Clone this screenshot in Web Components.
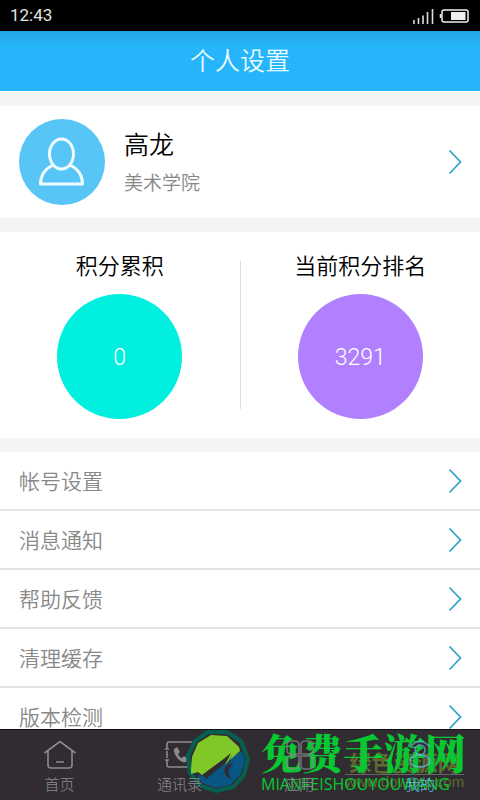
<!DOCTYPE html>
<html lang="zh-CN">
<head>
<meta charset="utf-8">
<title>个人设置</title>
<style>
html,body{margin:0;height:100%}
body{font-family:Roboto,"Noto Sans CJK SC",sans-serif;font-weight:300;background:#f4f4f4}
</style>
</head>
<body>
<settings-app></settings-app>
<script>
function define(name, html) {
  customElements.define(name, class extends HTMLElement {
    constructor() {
      super();
      this.attachShadow({mode: 'open'}).innerHTML = html;
    }
  });
}

define('status-bar', `
<style>
:host{display:flex;align-items:center;justify-content:space-between;height:31px;padding:0 10px;background:#000;color:#e4e4e4;font-size:17px;font-weight:400;line-height:31px}
svg{display:block}
</style>
<time>12:43</time>
<svg width="58" height="18" viewBox="0 0 58 18" aria-hidden="true">
<path d="M2 13v4M6.500 11v6M11 8.500v8.500M15.500 5v12M20.500 2v15" stroke="#ddd" stroke-width="1.600"/>
<rect x="30" y="3" width="26" height="12" rx="2" fill="none" stroke="#eee" stroke-width="1.500"/>
<path d="M28.500 7v4" stroke="#eee" stroke-width="1.500"/><rect x="39" y="5" width="14.500" height="8" fill="#eee"/>
</svg>`);

define('title-bar', `
<style>
:host{display:block;height:60px;background:linear-gradient(#25a5e2,#26b5fb 16px);color:#e6fbff;border-bottom:1px solid #fff;text-align:center}
h1{margin:0;font-size:25px;font-weight:350;line-height:62px}
</style>
<h1><slot></slot></h1>`);

define('chevron-icon', `
<style>:host{display:block}svg{display:block}</style>
<svg width="14" height="26" viewBox="0 0 14 26" aria-hidden="true"><path d="M1.500 1.500L12.500 13L1.500 24.500" fill="none" stroke="#2ba3c6" stroke-width="1.700"/></svg>`);

define('user-card', `
<style>
:host{display:block;background:#fff}
button{all:unset;box-sizing:border-box;display:flex;align-items:center;width:100%;height:112px;padding:0 18px 0 19px;cursor:pointer}
.avatar{display:block;flex:none}
.text{flex:1;display:flex;flex-direction:column;padding:4px 0 0 19px}
.name{font-size:25px;line-height:40px;color:#000;font-weight:350}
.dept{font-size:19px;line-height:36px;color:#888;font-weight:350}
</style>
<button type="button">
<svg class="avatar" width="86" height="86" viewBox="0 0 86 86" aria-hidden="true">
<circle cx="43" cy="43" r="43" fill="#57c6f6"/>
<g fill="none" stroke="#f0fcff" stroke-width="3" stroke-linejoin="round"><ellipse cx="42.500" cy="35" rx="12" ry="15"/><path d="M34 46C26 50 21.500 56 21.500 65H63.500C63.500 56 59 50 51 46"/></g>
</svg>
<span class="text"><span class="name"><slot name="name"></slot></span><span class="dept"><slot name="dept"></slot></span></span>
<chevron-icon></chevron-icon>
</button>`);

define('score-panel', `
<style>
:host{display:grid;grid-template-columns:1fr 1px 1fr;align-items:center;height:206px;background:#fff}
i{height:148px;background:#ddd}
</style>
<slot name="left"></slot><i></i><slot name="right"></slot>`);

define('score-dial', `
<style>
:host{display:flex;flex-direction:column;align-items:center;gap:10px;padding-bottom:2px}
h2{margin:0;font-size:22px;line-height:34px;font-weight:350;color:#000}
output{display:grid;place-items:center;box-sizing:border-box;width:125px;height:125px;padding-top:2px;border-radius:50%;background:var(--dial);color:#fff;font-size:23px}
</style>
<h2><slot name="label"></slot></h2><output><slot></slot></output>`);

define('menu-row', `
<style>
:host{display:block;background:#fff}
button{all:unset;box-sizing:border-box;display:flex;align-items:center;justify-content:space-between;width:100%;height:59px;padding:0 18px 0 19px;border-bottom:2px solid #e4e4e4;font-size:21px;font-weight:350;color:#888;cursor:pointer}
span{padding-bottom:2px}
</style>
<button type="button"><span><slot></slot></span><chevron-icon></chevron-icon></button>`);

define('nav-tab', `
<style>
:host{display:block;color:#8d898e;border-right:1px solid #2d292f}
a{display:flex;flex-direction:column;align-items:center;height:70px;box-sizing:border-box;padding-top:9px;gap:1px;color:inherit;text-decoration:none;font-size:15px;line-height:26px}
span{position:relative;z-index:1}
:host([current]){color:#68b8e8;border-right:0}
</style>
<a href="#"><slot name="icon"></slot><span><slot></slot></span></a>`);

define('tab-bar', `
<style>
:host{display:grid;grid-template-columns:repeat(4,1fr);position:relative;background:#302c32;border-top:1px solid #111;box-sizing:border-box;height:71px}
svg{display:block;fill:none;stroke:currentColor;stroke-width:1.600}
svg.over{position:relative;z-index:1;opacity:.7}
</style>
<nav-tab><svg slot="icon" width="34" height="32" viewBox="0 0 34 32"><path d="M1.500 14L17 2.500L32.500 14M5 12v14q0 3 3 3h18q3 0 3-3V12M13 23h8"/></svg>首页</nav-tab>
<nav-tab><svg slot="icon" width="34" height="32" viewBox="0 0 34 32"><path d="M4 10V5q0-2 2-2h22q2 0 2 2v21q0 2-2 2H6q-2 0-2-2v-5M2 10h4M2 21h4M4 12v7"/><path d="M11 10l3-2 3 5-2 2q1 3 4 4l2-2 4 3-2 3c-5 2-13-7-12-13z" fill="currentColor" stroke="none"/></svg>通讯录</nav-tab>
<nav-tab><svg class="over" slot="icon" width="34" height="32" viewBox="0 0 34 32"><path d="M16 15V6q0-4-4-4H8Q4 2 4 6v5q0 4 4 4zM18 15V6q0-4 4-4h4q4 0 4 4v5q0 4-4 4zM16 17v9q0 4-4 4H8q-4 0-4-4v-5q0-4 4-4zM18 17v9q0 4 4 4h4q4 0 4-4v-5q0-4-4-4z"/></svg>应用</nav-tab>
<nav-tab current><svg class="over" slot="icon" width="34" height="32" viewBox="0 0 34 32"><path d="M7 8q10-11 20 0"/><circle cx="17" cy="11" r="5"/><ellipse cx="17" cy="22" rx="10" ry="6"/></svg>我的</nav-tab>
<site-marks></site-marks>`);

define('site-marks', `
<style>
:host{position:absolute;inset:0;pointer-events:none}
svg,.main,.side{position:absolute}
svg{left:185px;top:-1px}
.main{left:261px;top:0;color:#08c832;white-space:nowrap}
.main b{display:block;font:900 41px/44px "Noto Serif CJK SC","Noto Sans CJK SC",serif}
.main small{display:block;font:400 16px/20px "Open Sans",sans-serif}
.side{left:345px;top:18px;color:#5d6b2e;text-align:center;white-space:nowrap}
.side b{display:block;font:700 22px/26px "Noto Sans CJK SC",sans-serif;border-bottom:1px solid #666}
.side small{display:block;font:400 15px/14px "Liberation Sans",sans-serif}
</style>
<div class="side"><b>绿色资源网</b><small>www.downcc.com</small></div>
<svg width="66" height="66" viewBox="0 0 66 66" aria-hidden="true">
<path d="M23 3L42 3L56 12L63 30L59 46L48 58L31 62L16 57L5 44L3 27L10 12Z" fill="#302c32" stroke="#075f51" stroke-width="4"/>
<path d="M12 46L24 47L37 37L46 29L57 22L60 31L56 45L45 56L31 59L17 54Z" fill="#075683"/>
<path d="M6 40L7 28L13 14L26 6L42 7L54 18L55 22L44 32L40 36L46 24L36 32L25 40L17 46L13 43L6 45Z" fill="#80c827"/>
<path d="M47 26L39 41L41 47L46 50L43 42L49 32L43 37ZM17 46L25 44L36 35L27 45L21 50Z" fill="#302c32"/>
</svg>
<div class="main"><b>免费手游网</b><small>MIANFEISHOUYOUWANG</small></div>`);

define('settings-app', `
<style>
:host{display:flex;flex-direction:column;height:100vh;overflow:hidden}
main{flex:1;min-height:0;overflow:hidden;display:flex;flex-direction:column;gap:14px;padding-top:14px}
main>*{flex:none}
</style>
<status-bar></status-bar>
<title-bar>个人设置</title-bar>
<main>
<user-card><span slot="name">高龙</span><span slot="dept">美术学院</span></user-card>
<score-panel>
<score-dial slot="left" style="--dial:#00efdf"><span slot="label">积分累积</span>0</score-dial>
<score-dial slot="right" style="--dial:#b180ff"><span slot="label">当前积分排名</span>3291</score-dial>
</score-panel>
<section>
<menu-row>帐号设置</menu-row><menu-row>消息通知</menu-row><menu-row>帮助反馈</menu-row><menu-row>清理缓存</menu-row><menu-row>版本检测</menu-row>
</section>
</main>
<tab-bar></tab-bar>`);
</script>
</body>
</html>
